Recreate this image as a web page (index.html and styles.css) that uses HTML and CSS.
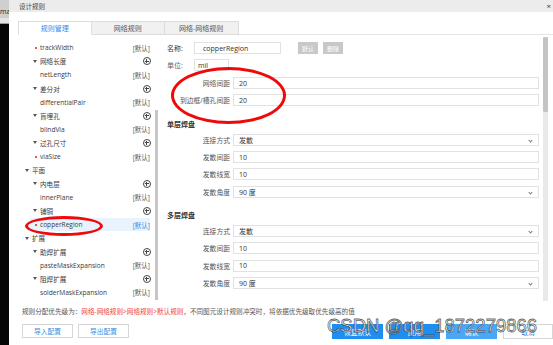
FILE: index.html
```html
<!DOCTYPE html>
<html lang="zh">
<head>
<meta charset="utf-8">
<title>设计规则</title>
<link rel="stylesheet" href="styles.css">
</head>
<body>
<div class="screen">
  <div class="side">
    <div class="side-top">ma</div>
    <div class="side-mid"></div>
    <div class="side-dark"></div>
  </div>
  <div class="dialog">
    <div class="titlebar"><span class="title">设计规则</span><span class="close">×</span></div>
    <div class="content">
      <div class="tabs">
        <div class="tab active">规则管理</div>
        <div class="tab">网络规则</div>
        <div class="tab">网络-网络规则</div>
      </div>
      <div class="main">
        <div class="tree">
          <div class="tree-list">
            <div class="row l1"><span class="ico dot"></span><span class="name">trackWidth</span><span class="def">[默认]</span></div>
            <div class="row l1"><span class="ico caret"></span><span class="name">网络长度</span><span class="plus"></span></div>
            <div class="row l1"><span class="ico"></span><span class="name">netLength</span><span class="def">[默认]</span></div>
            <div class="row l1"><span class="ico caret"></span><span class="name">差分对</span><span class="plus"></span></div>
            <div class="row l1"><span class="ico"></span><span class="name">differentialPair</span><span class="def">[默认]</span></div>
            <div class="row l1"><span class="ico caret"></span><span class="name">盲埋孔</span><span class="plus"></span></div>
            <div class="row l1"><span class="ico"></span><span class="name">blindVia</span><span class="def">[默认]</span></div>
            <div class="row l1"><span class="ico caret"></span><span class="name">过孔尺寸</span><span class="plus"></span></div>
            <div class="row l1"><span class="ico dot"></span><span class="name">viaSize</span><span class="def">[默认]</span></div>
            <div class="row l0"><span class="ico caret"></span><span class="name">平面</span></div>
            <div class="row l1"><span class="ico caret"></span><span class="name">内电层</span><span class="plus"></span></div>
            <div class="row l1"><span class="ico"></span><span class="name">innerPlane</span><span class="def">[默认]</span></div>
            <div class="row l1"><span class="ico caret"></span><span class="name">铺铜</span><span class="plus"></span></div>
            <div class="row l1 selected"><span class="ico dot"></span><span class="name">copperRegion</span><span class="def">[默认]</span></div>
            <div class="row l0"><span class="ico caret"></span><span class="name">扩展</span></div>
            <div class="row l1"><span class="ico caret"></span><span class="name">助焊扩展</span><span class="plus"></span></div>
            <div class="row l1"><span class="ico"></span><span class="name">pasteMaskExpansion</span><span class="def">[默认]</span></div>
            <div class="row l1"><span class="ico caret"></span><span class="name">阻焊扩展</span><span class="plus"></span></div>
            <div class="row l1"><span class="ico"></span><span class="name">solderMaskExpansion</span><span class="def">[默认]</span></div>
          </div>
          <div class="scroll tree-scroll"><div class="thumb"></div></div>
        </div>
        <div class="form">
          <div class="form-body">
            <div class="frow">
              <span class="flabel">名称:</span>
              <div class="input name-input">copperRegion</div>
              <span class="gbtn first">默认</span>
              <span class="gbtn">删除</span>
            </div>
            <div class="frow">
              <span class="flabel light">单位:</span>
              <div class="input unit-input">mil</div>
            </div>
            <div class="field gap-lg"><span class="lbl">网络间距</span><div class="input">20</div></div>
            <div class="field"><span class="lbl">到边框/槽孔间距</span><div class="input">20</div></div>

            <div class="section">单层焊盘</div>
            <div class="field"><span class="lbl">连接方式</span><div class="input select">发散<span class="arrow"></span></div></div>
            <div class="field"><span class="lbl">发散间距</span><div class="input">10</div></div>
            <div class="field"><span class="lbl">发散线宽</span><div class="input">10</div></div>
            <div class="field"><span class="lbl">发散角度</span><div class="input select">90 度<span class="arrow"></span></div></div>

            <div class="section">多层焊盘</div>
            <div class="field"><span class="lbl">连接方式</span><div class="input select">发散<span class="arrow"></span></div></div>
            <div class="field"><span class="lbl">发散间距</span><div class="input">10</div></div>
            <div class="field"><span class="lbl">发散线宽</span><div class="input">10</div></div>
            <div class="field"><span class="lbl">发散角度</span><div class="input select">90 度<span class="arrow"></span></div></div>
          </div>
          <div class="scroll form-scroll"><div class="thumb"></div></div>
        </div>
      </div>
      <div class="note">规则分配优先级为：<span class="red">网络-网络规则&gt;网络规则&gt;默认规则</span>，不同图元设计规则冲突时，将依据优先级取优先级高的值</div>
      <div class="footer">
        <div class="left-btns">
          <span class="wbtn">导入配置</span>
          <span class="wbtn">导出配置</span>
        </div>
        <div class="right-btns">
          <span class="bbtn">恢复默认</span>
          <span class="bbtn">应用</span>
          <span class="bbtn light">确认</span>
          <span class="cbtn">取消</span>
        </div>
      </div>
    </div>
  </div>
  <div class="mark mark-tree"></div>
  <div class="mark mark-form"></div>
  <div class="watermark">CSDN @qq_1872279866</div>
</div>
</body>
</html>
```

FILE: styles.css
```css
* { box-sizing: border-box; margin: 0; padding: 0; }
html, body { width: 553px; height: 345px; overflow: hidden; }
body {
  font-family: "Open Sans", "Noto Sans CJK SC", sans-serif;
  font-size: 7px;
  color: #333;
  background: #000;
}
.screen { position: relative; display: flex; width: 553px; height: 345px; }

/* left background window strip */
.side { width: 9px; display: flex; flex-direction: column; }
.side-top { height: 18px; background: #cfcfcf; color: #222; font-size: 7px; line-height: 7px; padding-top: 8px; overflow: hidden; white-space: nowrap; }
.side-mid { height: 6px; background: #e4e4e4; border-bottom: 1px solid #999; }
.side-dark { flex: 1; background: #050505; }

/* dialog */
.dialog { flex: 1; background: #fff; display: flex; flex-direction: column; min-width: 0; }
.titlebar { height: 12px; background: #ececec; display: flex; align-items: center; justify-content: space-between; padding: 0 2px 0 10px; }
.title { font-size: 6.5px; color: #444; }
.close { font-size: 8px; color: #333; line-height: 8px; }

.content { flex: 1; display: flex; flex-direction: column; padding-left: 9px; }

.tabs { display: flex; margin-top: 9px; height: 14px; border-bottom: 1px solid #e4e4e4; }
.tab { width: 73.5px; height: 14px; border: 1px solid #dcdcdc; border-left: none; background: #f1f1f1; color: #555; display: flex; align-items: center; justify-content: center; font-size: 7px; margin-bottom: -1px; }
.tab:first-child { border-left: 1px solid #dcdcdc; }
.tab.active { background: #fff; color: #2d8cf0; border-bottom-color: #fff; }

.main { display: flex; height: 266px; }

/* tree */
.tree { width: 140px; display: flex; }
.tree-list { flex: 1; padding-top: 6px; padding-right: 5px; }
.row { height: 13.6px; display: flex; align-items: center; font-size: 6.6px; color: #3a3a3a; }
.row.l0 { padding-left: 7px; }
.row.l1 { padding-left: 15px; }
.ico { width: 7px; height: 7px; display: flex; align-items: center; justify-content: flex-start; flex: none; }
.ico.caret::before { content: ""; border-left: 2.5px solid transparent; border-right: 2.5px solid transparent; border-top: 3px solid #555; }
.ico.dot::before { content: ""; width: 2px; height: 2px; background: #f05050; margin-left: 2px; }
.name { flex: 1; white-space: nowrap; }
.def { color: #555; font-size: 6.5px; }
.plus { width: 8px; height: 8px; border: 1px solid #444; border-radius: 50%; position: relative; margin-right: -0.5px; }
.plus::before, .plus::after { content: ""; position: absolute; background: #444; }
.plus::before { left: 1px; right: 1px; top: 2.5px; height: 1px; }
.plus::after { top: 1px; bottom: 1px; left: 2.5px; width: 1px; }
.row.selected { background: #e8f3fd; margin-left: 12px; padding-left: 3px; }
.row.selected .def { color: #3c8dde; }

.scroll { width: 3px; display: flex; flex-direction: column; flex: none; }
.tree-scroll { padding-top: 75px; }
.tree-scroll .thumb { height: 190px; background: #c6c6c6; }

/* form */
.form { flex: 1; display: flex; padding-left: 2px; min-width: 0; }
.form-body { flex: 1; padding-left: 7px; padding-right: 4px; padding-top: 7px; }
.frow { display: flex; align-items: center; height: 12px; margin-bottom: 5px; }
.flabel { width: 27px; font-size: 7px; color: #333; }
.flabel.light { color: #666; }
.input { height: 12px; border: 1px solid #e2e2e2; display: flex; align-items: center; padding-left: 5px; font-size: 7px; color: #333; position: relative; flex: 1; }
.name-input { flex: none; width: 87px; padding-left: 8px; }
.unit-input { flex: none; width: 35px; padding-left: 3px; }
.gbtn { width: 20px; height: 12px; background: #c8c8c8; color: #fff; font-size: 6px; display: flex; align-items: center; justify-content: center; margin-left: 5px; }
.gbtn.first { margin-left: 17px; }

.field { display: flex; align-items: center; height: 12px; margin-top: 5.3px; }
.field.gap-lg { margin-top: 6px; }
.lbl { width: 66px; text-align: right; padding-right: 3px; font-size: 6.8px; color: #555; white-space: nowrap; flex: none; }
.section { font-weight: bold; font-size: 7px; color: #333; height: 12px; display: flex; align-items: center; margin-top: 11.5px; margin-bottom: -1px; }
.section + .field { margin-top: 5px; }
.arrow { position: absolute; right: 6px; top: 4px; width: 3px; height: 3px; border-right: 1px solid #777; border-bottom: 1px solid #777; transform: rotate(45deg); }

.form-scroll { width: 5px; margin-right: 5px; padding-top: 2px; }
.form-scroll .thumb { height: 75px; background: #c4c4c4; border-radius: 1px; }
.form-scroll::after { content: ""; flex: 1; background: #e9e9e9; }

/* footer */
.note { padding-left: 4px; margin-top: 5px; height: 10px; display: flex; align-items: center; font-size: 6.6px; color: #555; white-space: nowrap; }
.red { color: #f03c3c; }
.footer { display: flex; justify-content: space-between; margin-top: 8px; height: 15px; }
.left-btns { display: flex; gap: 5px; padding-left: 4px; }
.wbtn { width: 51px; height: 14px; border: 1px solid #d6d6d6; color: #3c8dde; font-size: 6.8px; display: flex; align-items: center; justify-content: center; background: #fff; }
.right-btns { display: flex; gap: 6px; }
.bbtn { width: 51px; height: 15px; background: #1f8ef1; color: #fff; font-size: 6.8px; display: flex; align-items: center; justify-content: center; }
.bbtn.light { background: #4ba6f5; }
.cbtn { width: 50px; height: 15px; border: 1px solid #d6d6d6; color: #3c8dde; font-size: 6.8px; display: flex; align-items: center; justify-content: center; background: #fff; }

/* annotations */
.mark { position: absolute; border: 3px solid #ee0a0a; border-radius: 50%; }
.mark-tree { left: 25px; top: 216px; width: 78px; height: 20px; }
.mark-form { left: 171px; top: 67px; width: 115px; height: 57px; border-width: 3.5px; }
.watermark { position: absolute; left: 327px; top: 315px; font-family: "Liberation Sans", Arial, sans-serif; font-size: 18.5px; line-height: 22px; color: rgba(255,255,255,0.85); -webkit-text-stroke: 0.8px rgba(60,60,60,0.8); white-space: nowrap; }
```
